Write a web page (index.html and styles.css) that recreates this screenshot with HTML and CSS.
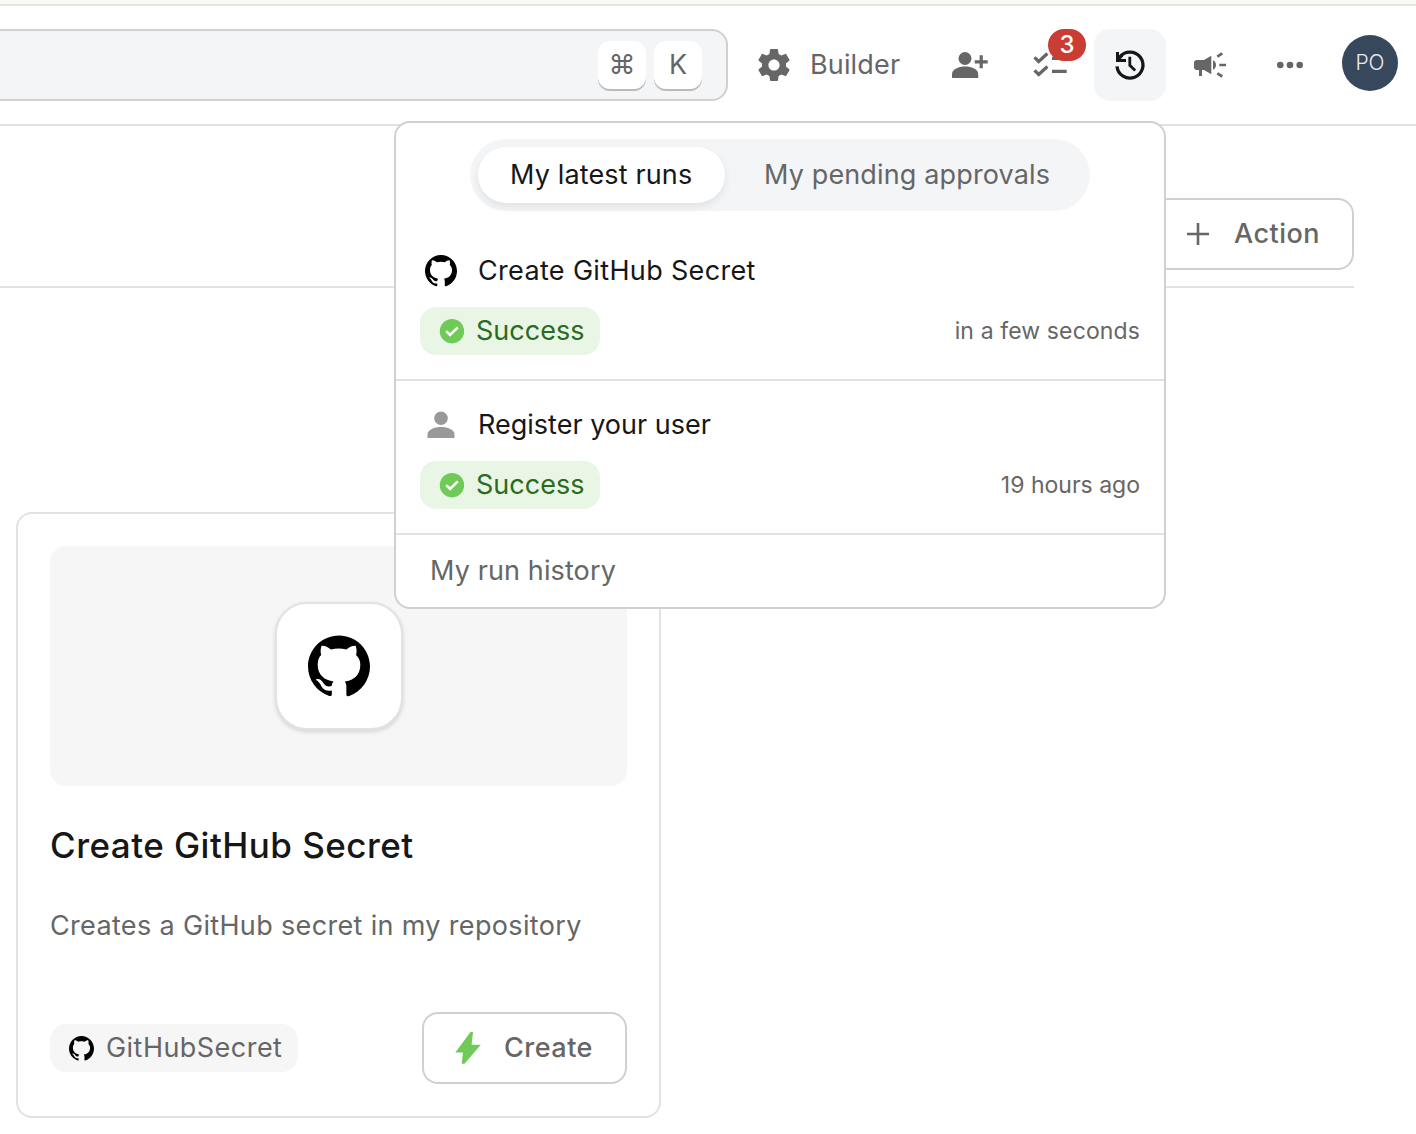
FILE: index.html
```html
<!DOCTYPE html>
<html lang="en">
<head>
<meta charset="utf-8">
<title>Self-service</title>
<link rel="stylesheet" href="styles.css">
</head>
<body>
<svg class="sprite" aria-hidden="true">
  <symbol id="github" viewBox="0 0 16 16"><path d="M8 0C3.6 0 0 3.6 0 8c0 3.550 2.300 6.550 5.500 7.600.5.1.65-.2.65-.4V14.200C4.200 14.500 3.700 13.600 3.300 12.800c-.3-.6-.7-1-1.100-1.250-.3-.25 0-.35.3-.35.7 0 1.100.5 1.500 1.100.6.9 1.400.95 2.100.7.05-.5.2-.8.5-1.150-2.300-.3-4.100-1.600-4.100-4.300 0-1.100.3-2 .9-2.500-.2-.6-.2-1.500.1-2.400.9-.05 1.700.4 2.400.95 1.300-.35 2.700-.35 4 0 .7-.55 1.500-1 2.400-.95.3.9.3 1.800.1 2.400.7.6 1.100 1.500 1.100 2.500 0 2.700-1.800 4.100-4 4.300.3.4.4.8.4 1.400v2c0 .3.2.5.6.4C13.700 14.550 16 11.550 16 8c0-4.400-3.600-8-8-8z"/></symbol>
  <symbol id="success" viewBox="0 0 25 25"><circle cx="13" cy="12.200" r="12.200" fill="#6fca58"/><path d="M7.200 12.100l3.900 3.900 7.700-7.700" fill="none" stroke="#fff" stroke-width="2.600"/></symbol>
</svg>
<div class="strip"></div>
<header class="topbar">
  <div class="search"><kbd class="key">⌘</kbd><kbd class="key">K</kbd></div>
  <a class="builder">
    <svg width="32" height="32" viewBox="2 2 20 20" fill="currentColor"><path d="M19.43 12.98c.04-.32.07-.64.07-.98s-.03-.66-.07-.98l2.11-1.65c.19-.15.24-.42.12-.64l-2-3.46c-.12-.22-.39-.3-.61-.22l-2.49 1c-.52-.4-1.08-.73-1.69-.98l-.38-2.65C14.46 2.18 14.25 2 14 2h-4c-.25 0-.46.18-.49.42l-.38 2.65c-.61.25-1.17.59-1.69.98l-2.49-1c-.23-.09-.49 0-.61.22l-2 3.46c-.13.22-.07.49.12.64l2.11 1.65c-.04.32-.07.65-.07.98s.03.66.07.98l-2.11 1.65c-.19.15-.24.42-.12.64l2 3.46c.12.22.39.3.61.22l2.49-1c.52.4 1.08.73 1.69.98l.38 2.65c.03.24.24.42.49.42h4c.25 0 .46-.18.49-.42l.38-2.65c.61-.25 1.17-.59 1.69-.98l2.49 1c.23.09.49 0 .61-.22l2-3.46c.12-.22.07-.49-.12-.64l-2.11-1.65zM12 15.5c-1.93 0-3.5-1.57-3.5-3.5s1.57-3.5 3.5-3.5 3.5 1.57 3.5 3.5-1.57 3.5-3.5 3.5z"/></svg>
    <span>Builder</span>
  </a>
  <nav class="tools">
    <button class="tool"><svg width="40" height="40" viewBox="0 0 40 40" fill="currentColor"><circle cx="15" cy="13.500" r="6.500"/><path d="M2 33v-4c0-5 7-7.500 13.200-7.500S28.200 24 28.200 29v4z"/><path d="M24.700 16.800h13M31.200 10.300v13" stroke="currentColor" stroke-width="3.200"/></svg></button>
    <button class="tool"><svg width="40" height="40" viewBox="0 0 40 40" fill="none" stroke="currentColor" stroke-width="3.200"><path d="M4.500 12.300l4.200 4.200 8.700-8M4.500 25.300l4.200 4.200 8.700-8M22 13.300h14.700M22 26.300h14.700"/></svg><span class="badge">3</span></button>
    <button class="tool active"><svg width="36" height="36" viewBox="0 0 36 36" fill="none" stroke="currentColor" stroke-width="3.300"><path d="M5 19.300a13 13 0 1 0 2.600-9.100"/><path d="M17.800 9.800v8.500l5.400 5.200" stroke-width="2.800"/><path d="M4 5h3v4.200l2-2 2.200 2.200L8.600 12H14v3H4z" fill="currentColor" stroke="none"/></svg></button>
    <button class="tool"><svg width="40" height="40" viewBox="0 0 40 40" fill="currentColor"><path d="M7 15h7l7.300-4.300v18.600L14 25h-2v6H9v-6H7a3 3 0 0 1-3-3v-4a3 3 0 0 1 3-3z"/><path d="M23 15.200c4 1.800 4 7.800 0 9.600z"/><path d="M27.300 11.600l5-3.200M29.300 20H36M27.300 28.300l5 3.200" fill="none" stroke="currentColor" stroke-width="2.700"/></svg></button>
    <button class="tool"><svg width="40" height="40" viewBox="0 0 40 40" fill="currentColor"><circle cx="10.300" cy="20" r="3.300"/><circle cx="20" cy="20" r="3.300"/><circle cx="29.700" cy="20" r="3.300"/></svg></button>
  </nav>
  <div class="avatar">PO</div>
</header>
<main class="page">
  <div class="page-head">
    <button class="btn add"><svg width="24" height="24" viewBox="0 0 24 24" fill="none" stroke="currentColor" stroke-width="2.600"><path d="M1 12h22M12 1v22"/></svg><span>Action</span></button>
  </div>
  <article class="card">
    <div class="cover"><div class="tile"><svg width="62" height="63"><use href="#github"/></svg></div></div>
    <h2 class="title">Create GitHub Secret</h2>
    <p class="desc">Creates a GitHub secret in my repository</p>
    <div class="card-foot">
      <span class="tag"><svg width="25" height="25"><use href="#github"/></svg><span>GitHubSecret</span></span>
      <button class="btn create"><svg width="26" height="32" viewBox="0 0 26 32" fill="#6fca58"><path d="M.3 20.500L15.500 0H18l-1.400 12.700h9.200L9.500 31.800H6.700L8 20.500z"/></svg><span>Create</span></button>
    </div>
  </article>
</main>
<section class="popover">
  <div class="tabs"><span class="tab on">My latest runs</span><span class="tab">My pending approvals</span></div>
  <div class="run first">
    <div class="run-name wide"><span class="run-icon"><svg width="32" height="32"><use href="#github"/></svg></span><span>Create GitHub Secret</span></div>
    <div class="run-meta"><span class="status"><svg width="25" height="25"><use href="#success"/></svg><span>Success</span></span><time class="relative">in a few seconds</time></div>
  </div>
  <div class="run">
    <div class="run-name"><span class="run-icon"><svg class="user" width="28" height="28" viewBox="0 0 28 28"><circle cx="14" cy="7.300" r="6.800"/><path d="M.5 27v-3.500C.5 18.500 7.500 16 14 16s13.500 2.500 13.500 7.500V27z"/></svg></span><span>Register your user</span></div>
    <div class="run-meta"><span class="status"><svg width="25" height="25"><use href="#success"/></svg><span>Success</span></span><time>19 hours ago</time></div>
  </div>
  <a class="history">My run history</a>
</section>
</body>
</html>
```
FILE: styles.css
```css
* { box-sizing: border-box; }
body {
  margin: 0;
  width: 1416px;
  height: 1134px;
  overflow: hidden;
  position: relative;
  background: #fff;
  color: #171717;
  font: 400 27px/36px Inter, "Liberation Sans", sans-serif;
}
button { font: inherit; color: inherit; background: none; border: 0; padding: 0; }
svg { display: block; flex: none; }
span, time { white-space: nowrap; }
.sprite { position: absolute; width: 0; height: 0; }
.strip { height: 6px; background: #f8faf1; border-bottom: 2px solid #e2e5da; }

.topbar {
  height: 120px;
  border-bottom: 2px solid #e2e2e2;
  display: flex;
  align-items: center;
  padding-right: 18px;
  color: #666;
}
.search {
  width: 728px;
  height: 72px;
  border: 2px solid #d0d0d0;
  border-left: 0;
  border-radius: 0 16px 16px 0;
  background: #f4f5f7;
  display: flex;
  justify-content: flex-end;
  align-items: center;
  gap: 8px;
  padding-right: 24px;
}
.key {
  width: 48px;
  height: 48px;
  border-radius: 12px;
  background: #fff;
  box-shadow: 0 2px 0 #bbb;
  font: 400 27px/48px Inter, sans-serif;
  text-align: center;
}
.builder { display: flex; align-items: center; gap: 20px; width: 206px; padding-left: 30px; letter-spacing: .15px; }
.tools { display: flex; gap: 8px; }
.tool { width: 72px; height: 72px; border-radius: 16px; display: grid; place-items: center; position: relative; }
.tool.active { background: #f4f5f7; color: #171717; }
.badge {
  position: absolute;
  left: 34px;
  top: 0;
  width: 38px;
  height: 32px;
  border-radius: 16px;
  background: #ca3d34;
  color: #fff;
  font-size: 24px;
  font-weight: 500;
  line-height: 32px;
}
.avatar {
  width: 56px;
  height: 56px;
  margin: -4px 0 0 auto;
  border-radius: 50%;
  background: #37475c;
  color: #e9ebee;
  font-size: 21px;
  font-weight: 300;
  line-height: 56px;
  text-align: center;
}

.page-head {
  width: 1354px;
  height: 162px;
  border-bottom: 2px solid #e2e2e2;
  display: flex;
  justify-content: flex-end;
  align-items: flex-end;
  padding-bottom: 16px;
}
.btn {
  height: 72px;
  border: 2px solid #d0d0d0;
  border-radius: 16px;
  display: flex;
  align-items: center;
  color: #666;
  font-weight: 500;
  letter-spacing: .5px;
}
.add { width: 202px; padding-left: 32px; gap: 24px; }

.card {
  width: 645px;
  height: 606px;
  margin: 224px 0 0 16px;
  border: 2px solid #e2e2e2;
  border-radius: 16px;
  padding: 32px;
}
.cover { height: 240px; border-radius: 16px; background: #f6f6f6; display: grid; place-items: center; }
.tile {
  width: 128px;
  height: 128px;
  border: 2px solid #e2e2e2;
  border-radius: 32px;
  background: #fff;
  box-shadow: 0 2px 4px rgba(0, 0, 0, .14);
  display: grid;
  place-items: center;
}
.title { margin: 35px 0 0; font-size: 35px; line-height: 48px; font-weight: 500; letter-spacing: .46px; }
.desc { margin: 39px 0 0; color: #666; letter-spacing: .34px; }
.card-foot { margin-top: 68px; display: flex; align-items: center; justify-content: space-between; color: #666; }
.tag {
  width: 248px;
  height: 48px;
  border-radius: 16px;
  background: #f6f6f6;
  display: flex;
  align-items: center;
  padding-left: 19px;
  gap: 12px;
  letter-spacing: .46px;
}
.tag svg { fill: #000; }
.create { width: 205px; padding-left: 31px; gap: 23px; }

.popover {
  position: absolute;
  left: 394px;
  top: 121px;
  width: 772px;
  height: 488px;
  border: 2px solid #d0d0d0;
  border-radius: 16px;
  background: #fff;
}
.tabs {
  width: 620px;
  height: 72px;
  margin: 16px auto 0;
  padding: 8px;
  border-radius: 36px;
  background: #f4f5f7;
  display: flex;
  color: #666;
  letter-spacing: .14px;
}
.tab { height: 56px; padding-left: 39px; line-height: 56px; }
.tab.on {
  width: 247px;
  padding-left: 32px;
  border-radius: 28px;
  background: #fff;
  color: #171717;
  box-shadow: 0 4px 8px rgba(0, 0, 0, .08);
}
.run { height: 154px; padding: 24px; border-bottom: 2px solid #e2e2e2; }
.run.first { height: 170px; padding-top: 40px; }
.run-name { display: flex; align-items: center; height: 40px; }
.run-name.wide { letter-spacing: .34px; }
.run-icon { width: 58px; padding-left: 5px; }
.run-icon .user { margin-left: 2px; fill: #999; }
.run-meta { display: flex; align-items: center; justify-content: space-between; margin-top: 16px; color: #666; }
.run-meta time { font-size: 23px; }
.run-meta .relative { letter-spacing: .12px; }
.status {
  width: 180px;
  height: 48px;
  border-radius: 16px;
  background: #e9f6e5;
  color: #2a6a21;
  display: flex;
  align-items: center;
  padding-left: 19px;
  gap: 12px;
}
.history { display: block; padding: 18px 34px; color: #666; letter-spacing: .12px; }
```
